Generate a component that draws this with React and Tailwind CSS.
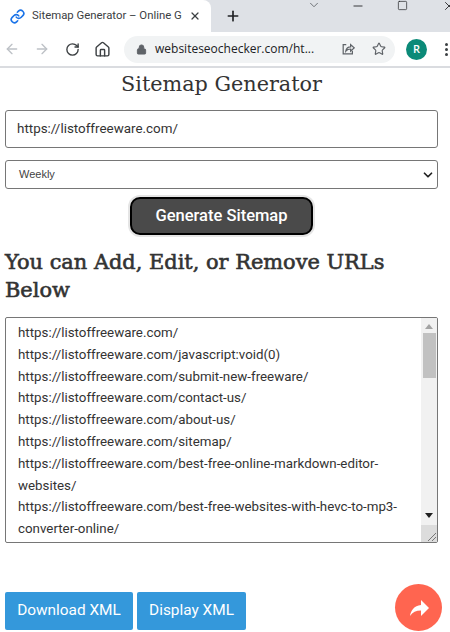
import React from 'react';
import { ArrowLeft, ArrowRight, RotateCw, Home, Lock, Star, ChevronDown, X, Plus, Minus, Square, Link } from 'lucide-react';

const urls = [
  'https://listoffreeware.com/',
  'https://listoffreeware.com/javascript:void(0)',
  'https://listoffreeware.com/submit-new-freeware/',
  'https://listoffreeware.com/contact-us/',
  'https://listoffreeware.com/about-us/',
  'https://listoffreeware.com/sitemap/',
  'https://listoffreeware.com/best-free-online-markdown-editor-',
  'websites/',
  'https://listoffreeware.com/best-free-websites-with-hevc-to-mp3-',
  'converter-online/',
];

const BrowserBar = () => (
  <div className="font-['Open_Sans',sans-serif]">
    <div className="flex h-[32px] bg-[#dee1e6]">
      <div className="flex w-[211px] items-center rounded-tr-lg bg-white pl-[10px] pr-[10px]">
        <Link size={15} strokeWidth={2.6} className="shrink-0 text-[#1a73e8]" />
        <span className="ml-[7px] w-[152px] whitespace-nowrap font-['Roboto',sans-serif] text-[11.35px] text-[#3c4043]">
          Sitemap Generator – Online G
        </span>
        <X size={12} strokeWidth={2.5} className="ml-[6px] shrink-0 text-[#3c4043]" />
      </div>
      <div className="ml-[14px] flex items-center">
        <Plus size={16} strokeWidth={2.5} className="text-[#202124]" />
      </div>
      <div className="ml-auto -mr-[6px] flex items-start text-[#202124]">
        <ChevronDown size={14} strokeWidth={1.5} className="-mt-[2px] text-[#5f6368]" />
        <Minus size={14} strokeWidth={1.5} className="ml-[30px] -mt-[1px]" />
        <Square size={11} strokeWidth={1.5} className="ml-[32px]" />
        <X size={14} strokeWidth={1.5} className="ml-[34px] -mt-[1px]" />
      </div>
    </div>
    <div className="flex h-[36px] items-center border-b-2 border-[#dadce0] bg-white pl-[4px]">
      <ArrowLeft size={16} className="text-[#bdc1c6]" />
      <ArrowRight size={16} className="ml-[14px] text-[#bdc1c6]" />
      <RotateCw size={15} strokeWidth={2.2} className="ml-[15px] text-[#3c4043]" />
      <Home size={17} strokeWidth={2} className="ml-[14px] text-[#3c4043]" />
      <div className="ml-[13px] flex h-[27px] w-[271px] items-center rounded-full bg-[#f1f3f4] pl-[12px]">
        <Lock size={11} fill="#5f6368" className="shrink-0 text-[#5f6368]" />
        <span className="ml-[8px] w-[156px] whitespace-nowrap text-[12px] text-[#202124]">websiteseochecker.com/ht...</span>
        <svg viewBox="0 0 16 16" className="ml-[30px] h-[14px] w-[14px] shrink-0" fill="none" stroke="#5f6368" strokeWidth="1.4">
          <path d="M6 3H2.5v10.5h10.5V10" />
          <path d="M5.5 10.5C6 7 8 5.5 11 5.5V3l4 3.7-4 3.7V8C8.5 8 7 8.7 5.5 10.5z" />
        </svg>
        <Star size={14} strokeWidth={2} className="ml-[17px] shrink-0 text-[#5f6368]" />
      </div>
      <div className="ml-[11px] flex h-[21px] w-[21px] items-center justify-center rounded-full bg-[#0b8a78] text-[11px] font-semibold text-white">
        R
      </div>
      <div className="ml-[18px] flex flex-col gap-[2px]">
        <span className="h-[3px] w-[3px] rounded-full bg-[#3c4043]" />
        <span className="h-[3px] w-[3px] rounded-full bg-[#3c4043]" />
        <span className="h-[3px] w-[3px] rounded-full bg-[#3c4043]" />
      </div>
    </div>
  </div>
);

const FakeScrollbar = () => (
  <div className="flex w-[16px] shrink-0 flex-col items-center bg-[#f1f1f1]">
    <div className="mt-[6px] h-0 w-0 border-x-[4px] border-b-[5px] border-x-transparent border-b-[#a3a3a3]" />
    <div className="mt-[4px] h-[45px] w-[13px] bg-[#c1c1c1]" />
    <div className="mt-auto mb-[7px] h-0 w-0 border-x-[4px] border-t-[5px] border-x-transparent border-t-[#202020]" />
    <div className="h-[17px] w-[16px] bg-[#dcdcdc]">
      <svg viewBox="0 0 16 17" className="h-[17px] w-[16px]">
        <path d="M15 8 7 16M15 12 11 16" stroke="#777" strokeWidth="1" fill="none" />
      </svg>
    </div>
  </div>
);

export default function App() {
  return (
    <div className="relative h-[632px] w-[450px] overflow-hidden bg-white font-['Roboto',sans-serif]">
      <BrowserBar />

      <div className="pl-[5px] pr-[12px]">
        <h1 className="mt-[1px] text-center font-['DejaVu_Serif',serif] text-[20.75px] leading-[30px] font-normal text-[#333]">
          Sitemap Generator
        </h1>

        <div className="mt-[11px] flex h-[38px] items-center rounded-[3px] border border-[#767676] pl-[11px] text-[13.4px] text-[#333]">
          https://listoffreeware.com/
        </div>

        <div className="mt-[12px] flex h-[29px] items-center justify-between rounded-[3px] border border-[#767676] pl-[13px] pr-[2px] font-['Liberation_Sans',sans-serif] text-[11px] text-[#444]">
          Weekly
          <ChevronDown size={14} strokeWidth={3} className="text-[#222]" />
        </div>

        <div className="mt-[8px] flex justify-center">
          <button className="h-[38px] w-[183px] rounded-[10px] border-2 border-black bg-[#4a4a4a] text-[16.5px] font-medium text-white ring-2 ring-[#e5e5e5]">
            Generate Sitemap
          </button>
        </div>

        <h2 className="mt-[13px] font-['DejaVu_Serif',serif] text-[20.9px] leading-[28px] font-normal text-[#333] [-webkit-text-stroke:0.6px_#333]">
          You can Add, Edit, or Remove URLs Below
        </h2>

        <div className="mt-[13px] flex h-[226px] overflow-hidden rounded-[2px] border border-[#767676]">
          <div className="min-w-0 flex-1 whitespace-nowrap pl-[12px] pt-[4px] text-[13.33px] leading-[21.8px] text-[#333]">
            {urls.map((line) => (
              <div key={line}>{line}</div>
            ))}
          </div>
          <FakeScrollbar />
        </div>

        <div className="mt-[49px] flex gap-[4px]">
          <button className="h-[38px] w-[128px] rounded-[2px] bg-[#3498db] text-[15.4px] text-white">Download XML</button>
          <button className="h-[38px] w-[109px] rounded-[2px] bg-[#3498db] text-[15.4px] text-white">Display XML</button>
        </div>
      </div>

      <div className="absolute left-[395px] top-[584px] flex h-[47px] w-[47px] items-center justify-center rounded-full bg-[#ff6550]">
        <svg viewBox="0 0 24 24" className="h-[24px] w-[24px]" fill="#fff">
          <path d="M14 4v5C7 10 4 14 3 20c2.6-3.8 6-5.5 11-5.5V20l8-8z" />
        </svg>
      </div>
    </div>
  );
}
